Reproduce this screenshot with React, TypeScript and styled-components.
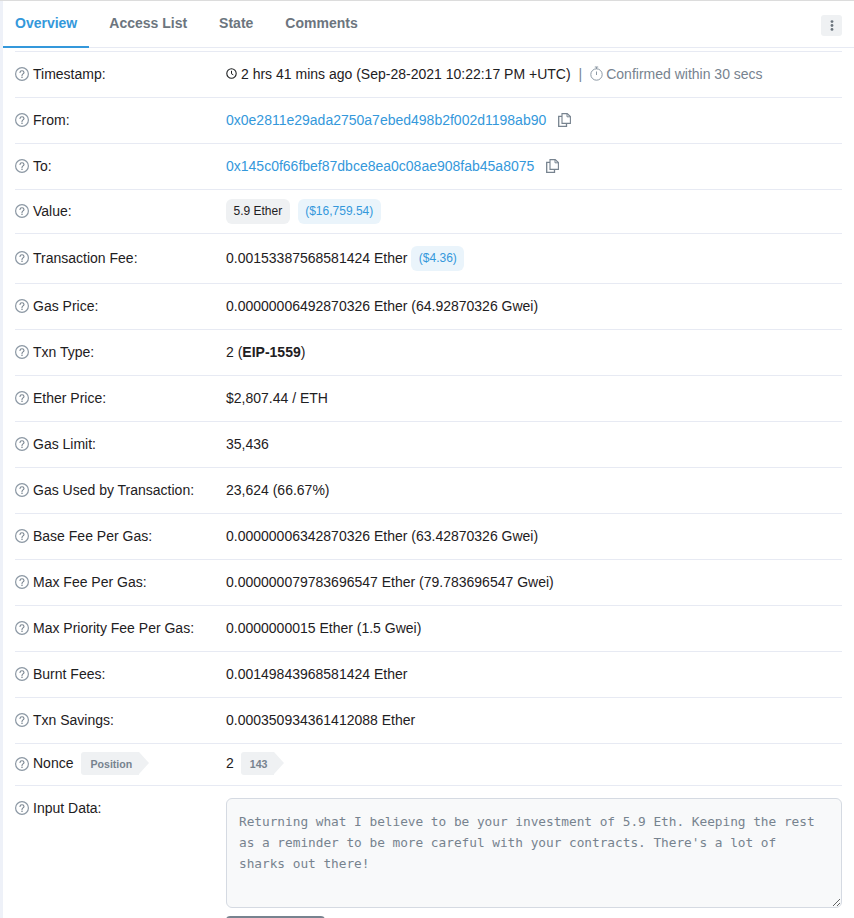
import React from "react";
import styled, { createGlobalStyle } from "styled-components";

const GlobalStyle = createGlobalStyle`
    html, body {
        margin: 0;
        padding: 0;
        height: 918px;
        overflow: hidden;
        background: #fff;
        font-family: "Liberation Sans", Arial, sans-serif;
        font-size: 14px;
        color: #1e2022;
    }
`;

const Page = styled.div`
    height: 918px;
    padding-left: 3px;
    box-sizing: border-box;
    background: #eef1f8;
    border-top: 1px solid #dcdcdc;
    overflow: hidden;
`;

const Card = styled.div`
    background: #fff;
    height: 100%;
`;

const TabBar = styled.div`
    display: flex;
    align-items: stretch;
    height: 47px;
    box-sizing: border-box;
    border-bottom: 1px solid #e7eaf3;
    padding-right: 12px;
`;

const Tab = styled.div<{ $active?: boolean }>`
    display: flex;
    align-items: center;
    height: 47px;
    box-sizing: border-box;
    padding: 0 12px 2px;
    margin-right: 8px;
    font-weight: 700;
    font-size: 14px;
    color: ${(p) => (p.$active ? "#3498db" : "#6c757e")};
    border-bottom: 2px solid ${(p) => (p.$active ? "#3498db" : "transparent")};
`;

const MenuButton = styled.div`
    margin: 14px 0 0 auto;
    width: 21px;
    height: 21px;
    border-radius: 3px;
    background: #eff1f3;
    display: flex;
    align-items: center;
    justify-content: center;
    color: #6c757e;
`;

const Content = styled.div`
    padding: 3px 12px 0 12px;
`;

const Row = styled.div<{ $h: number }>`
    display: flex;
    align-items: center;
    height: ${(p) => p.$h}px;
    box-sizing: border-box;
    padding-bottom: 2px;
    border-top: 1px solid #e7eaf3;
`;

const InputRow = styled(Row)`
    align-items: flex-start;
    padding-top: 12px;
`;

const Label = styled.div`
    flex: 0 0 211px;
    display: flex;
    align-items: center;
    gap: 4px;
    color: #1e2022;
`;

const InputLabel = styled(Label)`
    margin-top: 2px;
`;

const Value = styled.div`
    display: flex;
    align-items: center;
    white-space: pre;
    color: #1e2022;
`;

const Link = styled.span`
    color: #3498db;
`;

const Muted = styled.span`
    color: #77838f;
`;

const Sep = styled.span`
    color: #77838f;
    margin: 0 8px;
`;

const CopyWrap = styled.span`
    display: inline-flex;
    margin-left: 12px;
    color: #77838f;
`;

const Pill = styled.span<{ $info?: boolean }>`
    display: inline-flex;
    align-items: center;
    box-sizing: border-box;
    height: 25px;
    padding: 0 7.5px 2px;
    margin: 2px 8px 0 0;
    border-radius: 6px;
    font-size: 12px;
    background: ${(p) => (p.$info ? "#eaf4fb" : "#eff1f3")};
    color: ${(p) => (p.$info ? "#3498db" : "#1e2022")};
`;

const ArrowTag = styled.span`
    display: inline-flex;
    align-items: center;
    height: 23px;
    padding: 0 7px 0 9px;
    background: #eff1f3;
    border-radius: 3px 0 0 3px;
    font-size: 10.6px;
    font-weight: 700;
    color: #77838f;
    position: relative;
    margin-right: 11px;
    &::after {
        content: "";
        position: absolute;
        left: 100%;
        top: 0;
        border-style: solid;
        border-width: 11.5px 0 11.5px 10px;
        border-color: transparent transparent transparent #eff1f3;
    }
`;

const NonceLabel = styled(Label)`
    gap: 0;
`;

const NonceText = styled.span`
    margin: -2px 8px 0 4px;
`;

const NonceValue = styled.span`
    margin: -2px 7px 0 0;
`;

const InputColumn = styled.div`
    flex: 1;
`;

const DataBox = styled.textarea`
    display: block;
    width: 100%;
    height: 110px;
    box-sizing: border-box;
    padding: 12px;
    border: 1px solid #d5dae2;
    border-radius: 6px;
    background: #f8f9fa;
    color: #77838f;
    font-family: "DejaVu Sans Mono", monospace;
    font-size: 12.8px;
    letter-spacing: -0.03px;
    line-height: 21px;
    outline: none;
`;

const ViewButton = styled.div`
    margin-top: 8px;
    width: 99px;
    height: 30px;
    border-radius: 4px;
    background: #77838f;
`;

const ClockSvg = styled.svg`
    margin-right: 4px;
`;

const TimerSvg = styled.svg`
    margin-right: 3px;
`;

const HelpIcon = () => (
    <svg width="14" height="14" viewBox="0 0 14 14" fill="none">
        <circle cx="7" cy="7" r="6.4" stroke="#8c98a4" strokeWidth="1.2" />
        <path
            d="M5 5.5C5 4.4 5.9 3.7 7 3.7s2 .7 2 1.7c0 1.5-2 1.5-2 3"
            stroke="#77838f"
            strokeWidth="1.1"
            strokeLinecap="round"
        />
        <circle cx="7" cy="10.3" r=".8" fill="#77838f" />
    </svg>
);

const ClockIcon = () => (
    <ClockSvg width="11" height="11" viewBox="0 0 11 11" fill="none">
        <circle cx="5.5" cy="5.5" r="4.7" stroke="#1e2022" strokeWidth="1.1" />
        <path d="M5.5 2.8v3l1.8 1" stroke="#1e2022" strokeWidth="1" />
    </ClockSvg>
);

const TimerIcon = () => (
    <TimerSvg width="13" height="15" viewBox="0 0 13 15" fill="none">
        <circle cx="6.5" cy="8.5" r="5.7" stroke="#8c98a4" strokeWidth="1" />
        <path d="M4.8 1h3.4M6.5 1v2M6.5 5.5v3.5" stroke="#8c98a4" strokeWidth="1" />
    </TimerSvg>
);

const CopyIcon = () => (
    <svg width="13" height="14" viewBox="0 0 13 14" fill="none">
        <path d="M4 .6h5.2L12.4 3.6v6.8H4z" stroke="#77838f" strokeWidth="1.1" fill="#fff" />
        <path d="M9 .8v3h3.2" stroke="#77838f" strokeWidth="1" />
        <path d="M4 3.4H.7v10h7.8v-3" stroke="#77838f" strokeWidth="1.3" />
    </svg>
);

const KebabIcon = () => (
    <svg width="4" height="11" viewBox="0 0 4 11" fill="currentColor">
        <circle cx="2" cy="1.6" r="1.4" />
        <circle cx="2" cy="5.5" r="1.4" />
        <circle cx="2" cy="9.4" r="1.4" />
    </svg>
);

type SimpleRow = { label: string; h: number; value: React.ReactNode };

const rows: SimpleRow[] = [
    {
        label: "Timestamp:",
        h: 46,
        value: (
            <>
                <ClockIcon />
                2 hrs 41 mins ago (Sep-28-2021 10:22:17 PM +UTC)
                <Sep>|</Sep>
                <TimerIcon />
                <Muted>Confirmed within 30 secs</Muted>
            </>
        ),
    },
    {
        label: "From:",
        h: 46,
        value: (
            <>
                <Link>0x0e2811e29ada2750a7ebed498b2f002d1198ab90</Link>
                <CopyWrap><CopyIcon /></CopyWrap>
            </>
        ),
    },
    {
        label: "To:",
        h: 46,
        value: (
            <>
                <Link>0x145c0f66fbef87dbce8ea0c08ae908fab45a8075</Link>
                <CopyWrap><CopyIcon /></CopyWrap>
            </>
        ),
    },
    {
        label: "Value:",
        h: 44,
        value: (
            <>
                <Pill>5.9 Ether</Pill>
                <Pill $info>($16,759.54)</Pill>
            </>
        ),
    },
    {
        label: "Transaction Fee:",
        h: 50,
        value: (
            <>
                0.00153387568581424 Ether <Pill $info>($4.36)</Pill>
            </>
        ),
    },
    { label: "Gas Price:", h: 46, value: "0.00000006492870326 Ether (64.92870326 Gwei)" },
    {
        label: "Txn Type:",
        h: 46,
        value: (
            <>
                2 (<b>EIP-1559</b>)
            </>
        ),
    },
    { label: "Ether Price:", h: 46, value: "$2,807.44 / ETH" },
    { label: "Gas Limit:", h: 46, value: "35,436" },
    { label: "Gas Used by Transaction:", h: 46, value: "23,624 (66.67%)" },
    { label: "Base Fee Per Gas:", h: 46, value: "0.00000006342870326 Ether (63.42870326 Gwei)" },
    { label: "Max Fee Per Gas:", h: 46, value: "0.000000079783696547 Ether (79.783696547 Gwei)" },
    { label: "Max Priority Fee Per Gas:", h: 46, value: "0.0000000015 Ether (1.5 Gwei)" },
    { label: "Burnt Fees:", h: 46, value: "0.00149843968581424 Ether" },
    { label: "Txn Savings:", h: 46, value: "0.000350934361412088 Ether" },
];

const message =
    "Returning what I believe to be your investment of 5.9 Eth. Keeping the rest as a reminder to be more careful with your contracts. There's a lot of sharks out there!";

export default function App() {
    return (
        <>
            <GlobalStyle />
            <Page>
                <Card>
                    <TabBar>
                        <Tab $active>Overview</Tab>
                        <Tab>Access List</Tab>
                        <Tab>State</Tab>
                        <Tab>Comments</Tab>
                        <MenuButton><KebabIcon /></MenuButton>
                    </TabBar>
                    <Content>
                        {rows.map((row) => (
                            <Row $h={row.h} key={row.label}>
                                <Label>
                                    <HelpIcon />
                                    {row.label}
                                </Label>
                                <Value>{row.value}</Value>
                            </Row>
                        ))}
                        <Row $h={42}>
                            <NonceLabel>
                                <HelpIcon />
                                <NonceText>Nonce</NonceText>
                                <ArrowTag>Position</ArrowTag>
                            </NonceLabel>
                            <Value>
                                <NonceValue>2</NonceValue>
                                <ArrowTag>143</ArrowTag>
                            </Value>
                        </Row>
                        <InputRow $h={140}>
                            <InputLabel>
                                <HelpIcon />
                                Input Data:
                            </InputLabel>
                            <InputColumn>
                                <DataBox readOnly value={message} />
                                <ViewButton />
                            </InputColumn>
                        </InputRow>
                    </Content>
                </Card>
            </Page>
        </>
    );
}
